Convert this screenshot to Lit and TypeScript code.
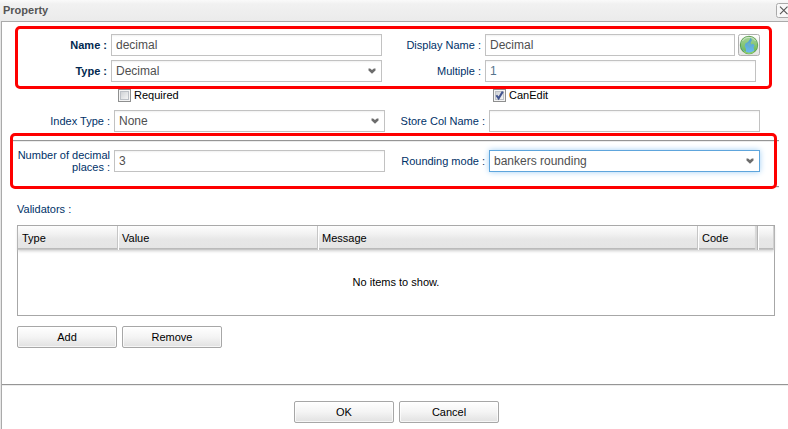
import { LitElement, html, css, svg, nothing } from "lit";
import { customElement, property } from "lit/decorators.js";

@customElement("form-field")
class FormField extends LitElement {
  @property() label = "";
  @property() value = "";
  @property({ type: Boolean }) select = false;
  @property({ type: Boolean }) required = false;
  @property({ type: Boolean }) focused = false;
  @property({ type: Boolean }) numeric = false;

  static styles = css`
    :host {
      display: flex;
      align-items: center;
      gap: 4px;
      height: 22px;
    }
    .label {
      flex: none;
      width: var(--label-width, 99px);
      text-align: right;
      font-size: 11px;
      line-height: 12px;
      color: #003168;
    }
    .label.required {
      font-weight: bold;
      color: #002850;
    }
    .box {
      flex: 1;
      box-sizing: border-box;
      height: 22px;
      display: flex;
      align-items: center;
      justify-content: space-between;
      padding: 0 4px;
      border: 1px solid #c2c2c2;
      background: linear-gradient(#f0f0f0 0, #ffffff 2px);
      font-size: 12px;
      line-height: 14px;
      color: #4f4f4f;
    }
    .box.numeric {
      color: #55748c;
    }
    .box.focused {
      border-color: #5ea5dc;
      background: #fff;
      box-shadow: 0 0 6px #a3d0f5;
    }
    .arrow {
      width: 8px;
      height: 6px;
      margin-right: 1px;
    }
  `;

  render() {
    return html`
      <div class="label ${this.required ? "required" : ""}">${this.label} :</div>
      <div class="box ${this.focused ? "focused" : ""} ${this.numeric ? "numeric" : ""}">
        <span>${this.value}</span>
        ${this.select
          ? html`<svg class="arrow" viewBox="0 0 8 6">
              <path d="M.5 .5h1.600L4 2l1.900-1.500h1.600v2L4 5.700.5 2.500z" fill="#6c6c6c" />
            </svg>`
          : nothing}
      </div>
    `;
  }
}

@customElement("check-field")
class CheckField extends LitElement {
  @property() label = "";
  @property({ type: Boolean }) checked = false;

  static styles = css`
    :host {
      display: flex;
      gap: 3px;
      height: 13px;
      font-size: 11px;
      line-height: 12px;
      color: #000;
    }
    .tick {
      width: 13px;
      height: 13px;
    }
  `;

  render() {
    return html`
      <svg class="tick" viewBox="0 0 13 13">
        <defs>
          <linearGradient id="face" x1="0" y1="0" x2="1" y2="1">
            <stop offset="0" stop-color="#cdd0d4" />
            <stop offset="1" stop-color="#f7f7f7" />
          </linearGradient>
        </defs>
        <rect x=".5" y=".5" width="12" height="12" fill="#f4f4f4" stroke="#8e8f8f" />
        <rect x="2.5" y="2.5" width="8" height="8" fill="url(#face)" stroke="#bcc0c6" />
        ${this.checked
          ? svg`<path d="M3.400 6.200L5.600 9.400 9.800 2.600" fill="none" stroke="#42548f" stroke-width="2" />`
          : nothing}
      </svg>
      <span>${this.label}</span>
    `;
  }
}

@customElement("push-button")
class PushButton extends LitElement {
  static styles = css`
    :host {
      display: block;
      box-sizing: border-box;
      width: 100px;
      height: 22px;
      border: 1px solid #a7a7a7;
      border-radius: 2px;
      background: linear-gradient(#ffffff, #f4f4f4 50%, #e1e1e1);
      box-shadow: inset 0 0 0 1px rgba(255, 255, 255, 0.7);
      text-align: center;
      font-size: 11px;
      line-height: 20px;
      color: #000;
    }
  `;
  render() {
    return html`<slot></slot>`;
  }
}

@customElement("app-root")
class AppRoot extends LitElement {
  static styles = css`
    :host {
      display: flex;
      flex-direction: column;
      position: relative;
      box-sizing: border-box;
      width: 788px;
      height: 429px;
      overflow: hidden;
      background: #fff;
      font-family: "Liberation Sans", Arial, sans-serif;
    }
    .title {
      flex: none;
      box-sizing: border-box;
      height: 21px;
      display: flex;
      justify-content: space-between;
      padding: 3px 0 0 3px;
      background: linear-gradient(#fafafa 0, #f1f1f1 4px, #ebebeb 100%);
      font-size: 11px;
      font-weight: bold;
      line-height: 15px;
      color: #555;
    }
    .close {
      flex: none;
      width: 12px;
      height: 15px;
    }
    .frame {
      flex: 1;
      display: flex;
      flex-direction: column;
      margin-left: 1px;
      border-left: 1px solid #aaa;
      border-top: 1px solid #aaa;
      box-shadow: -1px 0 0 #e6e6e6;
      padding-top: 12px;
    }
    .row {
      flex: none;
      display: flex;
      margin-bottom: 4px;
    }
    .top {
      padding-left: 11px;
    }
    .top .main {
      width: 369px;
      --label-width: 94px;
    }
    .top .side {
      width: 374px;
    }
    .top .side.short {
      width: 353px;
    }
    .lang {
      width: 22px;
      height: 22px;
      margin-left: 3px;
    }
    .checks {
      display: grid;
      grid-template-columns: 271px 271px;
      column-gap: 104px;
      padding-left: 116px;
      margin: 3px 0 8px;
    }
    .lower {
      padding-left: 9px;
      margin: 0;
    }
    .lower .main {
      width: 374px;
    }
    .lower .side {
      width: 375px;
      --label-width: 100px;
    }
    .rule {
      flex: none;
      height: 1px;
      margin: 8px 9px 9px 11px;
      background: #959595;
      box-shadow: 0 1px 0 #ececec;
    }
    .rule.second {
      margin: 14px 9px 0 11px;
    }
    .rule.wide {
      margin: 36px 0 16px;
    }
    .caption {
      flex: none;
      margin: 16px 0 0 15px;
      height: 22px;
      font-size: 11px;
      line-height: 13px;
      color: #003168;
    }
    .grid {
      flex: none;
      box-sizing: border-box;
      width: 758px;
      height: 91px;
      margin-left: 15px;
      border: 1px solid #a7a7a7;
      font-size: 11px;
    }
    .head {
      display: grid;
      grid-template-columns: 100px 200px 380px 60px 16px;
      box-sizing: border-box;
      height: 23px;
      background: linear-gradient(#fdfdfd, #f2f2f2 35%, #e7e7e7 60%, #e5e5e5);
      border-bottom: 1px solid #bababa;
      box-shadow: 0 1px 0 #c6c6c6, 0 2px 3px #ccc;
    }
    .cell {
      box-sizing: border-box;
      border-right: 1px solid #c6c6c6;
      padding-left: 4px;
      line-height: 24px;
    }
    .cell + .cell {
      border-left: 1px solid #fff;
      padding-left: 3px;
    }
    .cell:nth-child(4) {
      border-right-color: #b4b4b4;
      box-shadow: inset -2px 0 1px #d6d6d6;
    }
    .cell:last-child {
      border-right-color: #d0d0d0;
    }
    .empty {
      text-align: center;
      line-height: 66px;
    }
    .buttons {
      flex: none;
      display: flex;
      gap: 5px;
      margin: 10px 0 0 15px;
    }
    .footer {
      margin: 0 0 0 292px;
    }
    .mark {
      position: absolute;
      box-sizing: border-box;
      border: 3px solid #fe0000;
      border-radius: 5px;
    }
    .mark.first {
      left: 15px;
      top: 26px;
      width: 757px;
      height: 63px;
    }
    .mark.second {
      left: 10px;
      top: 133px;
      width: 767px;
      height: 56px;
    }
  `;

  render() {
    const columns = ["Type", "Value", "Message", "Code", ""];
    return html`
      <div class="title">
        <span>Property</span>
        <svg class="close" viewBox="0 0 12 15">
          <rect x=".5" y=".5" width="15" height="14" rx="2" fill="#f8f8f8" stroke="#aaa" />
          <path d="M4 3.700l7.500 7.500M11.500 3.700L4 11.200" stroke="#555" stroke-width="1.1" />
        </svg>
      </div>
      <div class="frame">
        <div class="row top">
          <form-field class="main" label="Name" value="decimal" required></form-field>
          <form-field class="side short" label="Display Name" value="Decimal"></form-field>
          <svg class="lang" viewBox="0 0 22 22">
            <defs>
              <linearGradient id="btn" x1="0" y1="0" x2="0" y2="1">
                <stop offset="0" stop-color="#fff" />
                <stop offset="1" stop-color="#e3e3e3" />
              </linearGradient>
              <linearGradient id="sea" x1="0" y1="0" x2="0" y2="1">
                <stop offset="0" stop-color="#4d9bc4" />
                <stop offset="1" stop-color="#6dbcf0" />
              </linearGradient>
              <linearGradient id="land" x1="0" y1="0" x2="0" y2="1">
                <stop offset="0" stop-color="#a5d39a" />
                <stop offset="1" stop-color="#6dbb55" />
              </linearGradient>
            </defs>
            <rect x=".5" y=".5" width="21" height="21" rx="2" fill="url(#btn)" stroke="#b0b0b0" />
            <circle cx="11" cy="11" r="8.600" fill="url(#sea)" stroke="#5fa050" stroke-width="1.200" />
            <path d="M3 9C4 5 7 2.800 11 2.800l1.500 1.700-2.500 3.500-2.600 1.500-.8 2.500 1.200 2.500.2 3.500C4.500 16 2.600 13 3 9z" fill="url(#land)" />
            <path d="M13 3c3.800.8 6.300 4 6.300 8.200 0 2.300-1 4.500-2.800 6l-1-3.700 1.200-2-1.700-1.700-1.800.7-.7-1.700 1.300-2.300z" fill="url(#land)" />
            <path d="M9 10l2.300-1.400L13 11l-1.500 3z" fill="#68b0c8" />
            <path d="M4.500 7C6 4.500 8.300 3.400 11 3.400s5 1.100 6.500 3.600" fill="none" stroke="#cfe6c8" stroke-width="1" />
            <path d="M6 17.500c3 2.200 7 2.200 10 0" fill="none" stroke="#8fd06a" stroke-width="1.200" />
          </svg>
        </div>
        <div class="row top">
          <form-field class="main" label="Type" value="Decimal" select required></form-field>
          <form-field class="side" label="Multiple" value="1" numeric></form-field>
        </div>
        <div class="row checks">
          <check-field label="Required"></check-field>
          <check-field label="CanEdit" checked></check-field>
        </div>
        <div class="row lower">
          <form-field class="main" label="Index Type" value="None" select></form-field>
          <form-field class="side" label="Store Col Name"></form-field>
        </div>
        <div class="rule"></div>
        <div class="row lower">
          <form-field class="main" label="Number of decimal places" value="3"></form-field>
          <form-field class="side" label="Rounding mode" value="bankers rounding" select focused></form-field>
        </div>
        <div class="rule second"></div>
        <div class="caption">Validators :</div>
        <div class="grid">
          <div class="head">${columns.map((c) => html`<div class="cell">${c}</div>`)}</div>
          <div class="empty">No items to show.</div>
        </div>
        <div class="buttons">
          <push-button>Add</push-button>
          <push-button>Remove</push-button>
        </div>
        <div class="rule wide"></div>
        <div class="buttons footer">
          <push-button>OK</push-button>
          <push-button>Cancel</push-button>
        </div>
      </div>
      <div class="mark first"></div>
      <div class="mark second"></div>
    `;
  }
}
